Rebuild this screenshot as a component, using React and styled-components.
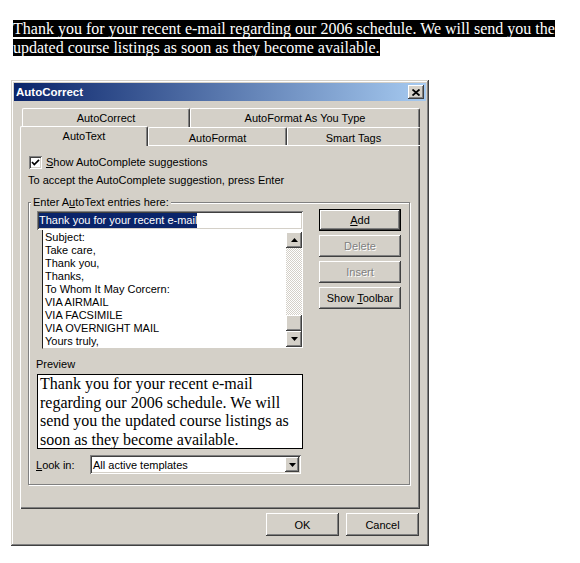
import React from "react";
import styled, { createGlobalStyle } from "styled-components";

const GlobalStyle = createGlobalStyle`
  body {
    margin: 0;
    background: #fff;
  }
`;

const raised = `
  box-shadow: inset -1px -1px #404040, inset 1px 1px #fff,
    inset -2px -2px #808080, inset 2px 2px #d4d0c8;
`;

const sunken = `
  box-shadow: inset 1px 1px #808080, inset -1px -1px #fff,
    inset 2px 2px #404040, inset -2px -2px #d4d0c8;
`;

const entries = [
  "Subject:",
  "Take care,",
  "Thank you,",
  "Thanks,",
  "To Whom It May Corcern:",
  "VIA AIRMAIL",
  "VIA FACSIMILE",
  "VIA OVERNIGHT MAIL",
  "Yours truly,",
];

export default function App() {
  return (
    <Page>
      <GlobalStyle />
      <Selection>
        <span>
          Thank you for your recent e-mail regarding our 2006 schedule. We will
          send you the updated course listings as soon as they become available.
        </span>
      </Selection>

      <Dialog>
        <TitleBar>
          <Title>AutoCorrect</Title>
          <CloseButton>
            <svg width="8" height="7" viewBox="0 0 8 7">
              <path d="M0.5 0.5 L7.5 6.5 M7.5 0.5 L0.5 6.5" stroke="#000" strokeWidth="1.8" />
            </svg>
          </CloseButton>
        </TitleBar>

        <Body>
          <TabRow $back>
            <Tab $w={168} $back>AutoCorrect</Tab>
            <Tab $w={230} $back>AutoFormat As You Type</Tab>
          </TabRow>
          <TabRow>
            <Tab $w={128} $selected>AutoText</Tab>
            <Tab $w={139}>AutoFormat</Tab>
            <Tab $w={133}>Smart Tags</Tab>
          </TabRow>

          <Panel>
            <CheckRow>
              <CheckBox>
                <svg width="9" height="9" viewBox="0 0 9 9">
                  <polyline points="1,4 3.3,6.5 8,1.8" fill="none" stroke="#000" strokeWidth="1.7" />
                </svg>
              </CheckBox>
              <span>
                <u>S</u>how AutoComplete suggestions
              </span>
            </CheckRow>
            <Hint>To accept the AutoComplete suggestion, press Enter</Hint>

            <Group>
              <Legend>
                Enter A<u>u</u>toText entries here:
              </Legend>
              <GroupGrid>
                <LeftColumn>
                  <EntryField>
                    <Highlighted>Thank you for your recent e-mail</Highlighted>
                  </EntryField>
                  <ListBox>
                    <Items>
                      {entries.map((item) => (
                        <Item key={item}>{item}</Item>
                      ))}
                    </Items>
                    <ScrollBar>
                      <ScrollButton>
                        <svg width="7" height="4" viewBox="0 0 7 4">
                          <polygon points="0,4 7,4 3.5,0" fill="#000" />
                        </svg>
                      </ScrollButton>
                      <Track />
                      <ScrollButton />
                      <ScrollButton>
                        <svg width="7" height="4" viewBox="0 0 7 4">
                          <polygon points="0,0 7,0 3.5,4" fill="#000" />
                        </svg>
                      </ScrollButton>
                    </ScrollBar>
                  </ListBox>

                  <FieldLabel>Preview</FieldLabel>
                  <PreviewBox>
                    Thank you for your recent e-mail regarding our 2006
                    schedule. We will send you the updated course listings as
                    soon as they become available.
                  </PreviewBox>

                  <LookRow>
                    <LookLabel>
                      <u>L</u>ook in:
                    </LookLabel>
                    <Select>
                      <span>All active templates</span>
                      <DropButton>
                        <svg width="7" height="4" viewBox="0 0 7 4">
                          <polygon points="0,0 7,0 3.5,4" fill="#000" />
                        </svg>
                      </DropButton>
                    </Select>
                  </LookRow>
                </LeftColumn>

                <ButtonColumn>
                  <SideButton $default>
                    <span>
                      <u>A</u>dd
                    </span>
                  </SideButton>
                  <SideButton $disabled>Delete</SideButton>
                  <SideButton $disabled>Insert</SideButton>
                  <SideButton>
                    <span>
                      Show <u>T</u>oolbar
                    </span>
                  </SideButton>
                </ButtonColumn>
              </GroupGrid>
            </Group>
          </Panel>

          <Footer>
            <DialogButton>OK</DialogButton>
            <DialogButton>Cancel</DialogButton>
          </Footer>
        </Body>
      </Dialog>
    </Page>
  );
}

const Page = styled.div`
  padding-top: 19px;
  font-family: "Liberation Sans", Arial, sans-serif;
`;

const Selection = styled.p`
  margin: 0 0 0 13px;
  width: 560px;
  font-family: "Liberation Serif", "Times New Roman", serif;
  font-size: 16px;
  line-height: 19px;
  span {
    background: #000;
    color: #fff;
  }
`;

const Dialog = styled.div`
  margin: 23px 0 0 11px;
  width: 418px;
  height: 466px;
  box-sizing: border-box;
  padding: 3px;
  background: #d4d0c8;
  box-shadow: inset -1px -1px #404040, inset 1px 1px #d4d0c8,
    inset -2px -2px #808080, inset 2px 2px #fff;
  font-size: 11px;
  color: #000;
`;

const TitleBar = styled.div`
  height: 18px;
  display: flex;
  align-items: center;
  justify-content: space-between;
  padding: 0 2px 0 2px;
  background: linear-gradient(to right, #0a246a, #a6caf0);
`;

const Title = styled.span`
  color: #fff;
  font-weight: bold;
  font-size: 11.5px;
`;

const CloseButton = styled.div`
  width: 16px;
  height: 14px;
  display: flex;
  align-items: center;
  justify-content: center;
  background: #d4d0c8;
  ${raised}
`;

const Body = styled.div`
  padding: 7px 6px 0 6px;
`;

const TabRow = styled.div`
  display: flex;
  height: ${(p) => (p.$back ? 19 : 18)}px;
  margin-left: ${(p) => (p.$back ? 2 : 0)}px;
`;

const Tab = styled.div`
  width: ${(p) => p.$w}px;
  height: ${(p) => (p.$selected ? 20 : p.$back ? 19 : 18)}px;
  margin-top: ${(p) => (p.$selected ? -1 : 0)}px;
  box-sizing: border-box;
  padding-top: ${(p) => (p.$back || p.$selected ? 3 : 4)}px;
  background: #d4d0c8;
  border-top: 1px solid #fff;
  border-left: 1px solid #fff;
  border-right: 1px solid #404040;
  border-radius: 2px 2px 0 0;
  box-shadow: inset -1px 0 #808080;
  line-height: 13px;
  text-align: center;
  overflow: hidden;
  position: ${(p) => (p.$selected ? "relative" : "static")};
  z-index: ${(p) => (p.$selected ? 2 : "auto")};
`;

const Panel = styled.div`
  height: 364px;
  box-sizing: border-box;
  padding: 11px 8px 0 8px;
  background: #d4d0c8;
  box-shadow: inset 1px 1px #fff, inset -1px -1px #404040,
    inset -2px -2px #808080;
`;

const CheckRow = styled.div`
  display: flex;
  align-items: center;
  gap: 4px;
  height: 13px;
  margin-left: 1px;
  line-height: 13px;
`;

const CheckBox = styled.div`
  width: 13px;
  height: 13px;
  box-sizing: border-box;
  display: flex;
  align-items: center;
  justify-content: center;
  background: #fff;
  ${sunken}
`;

const Hint = styled.div`
  margin-top: 5px;
  line-height: 13px;
`;

const Group = styled.fieldset`
  margin: 9px 0 0 0;
  width: 382px;
  box-sizing: border-box;
  padding: 0 8px 10px 8px;
  border: 1px solid #808080;
  box-shadow: 1px 1px 0 #fff, inset 1px 1px 0 #fff;
`;

const Legend = styled.legend`
  margin-left: -6px;
  padding: 0 2px;
  line-height: 13px;
  background: #d4d0c8;
`;

const GroupGrid = styled.div`
  display: grid;
  grid-template-columns: 266px 82px;
  column-gap: 16px;
  align-items: start;
`;

const LeftColumn = styled.div`
  margin-top: 2px;
  display: flex;
  flex-direction: column;
`;

const EntryField = styled.div`
  height: 19px;
  box-sizing: border-box;
  padding: 2px 2px 0 2px;
  background: #fff;
  ${sunken}
`;

const Highlighted = styled.span`
  display: inline-block;
  height: 15px;
  line-height: 15px;
  background: #0a246a;
  color: #fff;
`;

const ListBox = styled.div`
  margin-left: 5px;
  height: 119px;
  box-sizing: border-box;
  display: flex;
  background: #fff;
  border-left: 1px solid #202020;
  border-bottom: 1px solid #d4d0c8;
`;

const Items = styled.div`
  flex: 1;
  padding: 1px 0 0 2px;
`;

const Item = styled.div`
  line-height: 13px;
`;

const ScrollBar = styled.div`
  width: 16px;
  margin: 2px 1px 1px 0;
  display: flex;
  flex-direction: column;
`;

const ScrollButton = styled.div`
  height: 16px;
  flex-shrink: 0;
  display: flex;
  align-items: center;
  justify-content: center;
  background: #d4d0c8;
  ${raised}
`;

const Track = styled.div`
  flex: 1;
  background: repeating-conic-gradient(#fff 0 25%, #d4d0c8 0 50%) 0 0 / 2px 2px;
`;

const FieldLabel = styled.div`
  margin: 9px 0 0 -1px;
  line-height: 13px;
`;

const PreviewBox = styled.div`
  margin-top: 3px;
  height: 75px;
  box-sizing: border-box;
  padding: 0 2px;
  border: 1px solid #000;
  background: #fff;
  font-family: "Liberation Serif", "Times New Roman", serif;
  font-size: 16px;
  line-height: 18.6px;
  overflow: hidden;
`;

const LookRow = styled.div`
  margin-top: 6px;
  display: flex;
  align-items: center;
`;

const LookLabel = styled.span`
  width: 54px;
  margin-left: -1px;
`;

const Select = styled.div`
  width: 211px;
  height: 19px;
  box-sizing: border-box;
  padding: 2px 2px 2px 3px;
  display: flex;
  align-items: center;
  justify-content: space-between;
  background: #fff;
  ${sunken}
`;

const DropButton = styled.div`
  width: 14px;
  height: 15px;
  display: flex;
  align-items: center;
  justify-content: center;
  background: #d4d0c8;
  ${raised}
`;

const ButtonColumn = styled.div`
  display: flex;
  flex-direction: column;
  gap: 4px;
`;

const SideButton = styled.div`
  height: 22px;
  display: flex;
  align-items: center;
  justify-content: center;
  background: #d4d0c8;
  color: ${(p) => (p.$disabled ? "#808080" : "#000")};
  text-shadow: ${(p) => (p.$disabled ? "1px 1px 0 #fff" : "none")};
  ${(p) =>
    p.$default
      ? `box-shadow: inset 0 0 0 1px #000, inset -2px -2px #404040, inset 2px 2px #fff,
          inset -3px -3px #808080;`
      : raised}
`;

const Footer = styled.div`
  margin-top: 4px;
  padding-right: 1px;
  display: flex;
  justify-content: flex-end;
  gap: 7px;
`;

const DialogButton = styled.div`
  width: 73px;
  height: 23px;
  display: flex;
  align-items: center;
  justify-content: center;
  background: #d4d0c8;
  ${raised}
`;
